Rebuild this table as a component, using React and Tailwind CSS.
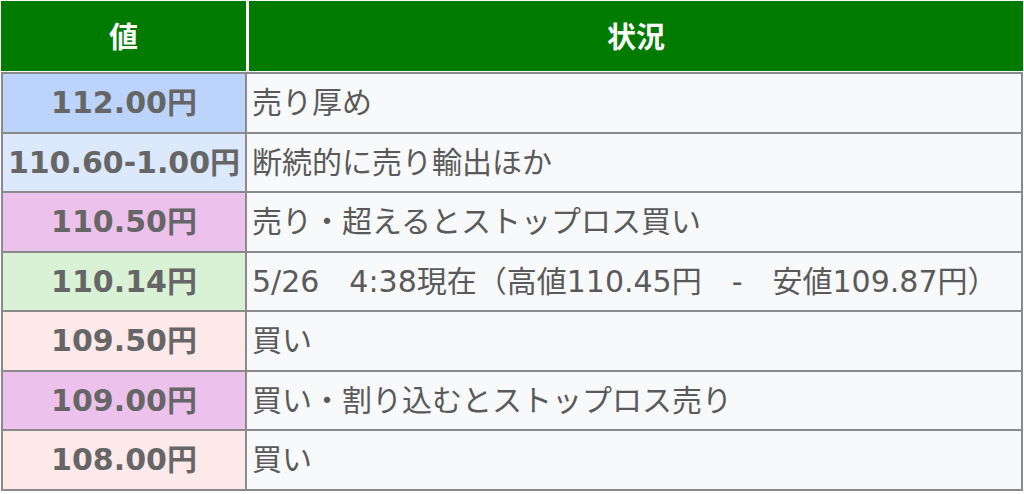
import React from "react";

const rows = [
  { v: "112.00円", s: "売り厚め", bg: "bg-[#bcd4fb]" },
  { v: "110.60-1.00円", s: "断続的に売り輸出ほか", bg: "bg-[#dce8fc]" },
  { v: "110.50円", s: "売り・超えるとストップロス買い", bg: "bg-[#ecc2ec]" },
  { v: "110.14円", s: "5/26　4:38現在（高値110.45円　-　安値109.87円）", bg: "bg-[#d9f2d6]" },
  { v: "109.50円", s: "買い", bg: "bg-[#fde9e9]" },
  { v: "109.00円", s: "買い・割り込むとストップロス売り", bg: "bg-[#ecc2ec]" },
  { v: "108.00円", s: "買い", bg: "bg-[#fde9e9]" },
];

export default function App() {
  return (
    <div className="w-[1024px] h-[494px] bg-white pl-[1px] pt-[1px]">
      <div className="w-[1022px]">
        <div className="flex h-[70px] gap-[3px] text-white font-bold text-[29px] font-['Noto_Sans_CJK_JP',sans-serif]">
          <div className="w-[245px] bg-[#007b00] flex items-center justify-center">値</div>
          <div className="flex-1 bg-[#007b00] flex items-center justify-center">状況</div>
        </div>
        <div className="mt-[1px] border-2 border-b-0 border-[#8a8a8a]">
          {rows.map((r, i) => (
            <div key={i} className="flex h-[59.5px] border-b-2 border-[#8a8a8a]">
              <div
                className={`w-[244px] shrink-0 border-r-2 border-[#8a8a8a] flex items-center justify-center text-[30px] font-bold text-[#666666] whitespace-nowrap ${r.bg} font-['DejaVu_Sans','Noto_Sans_CJK_JP',sans-serif]`}
              >
                {r.v}
              </div>
              <div className="flex-1 bg-[#f8f9fb] flex items-center pl-[5px] text-[30px] text-[#5a5a5a] whitespace-nowrap font-['DejaVu_Sans','Noto_Sans_CJK_JP',sans-serif]">
                {r.s}
              </div>
            </div>
          ))}
        </div>
      </div>
    </div>
  );
}
